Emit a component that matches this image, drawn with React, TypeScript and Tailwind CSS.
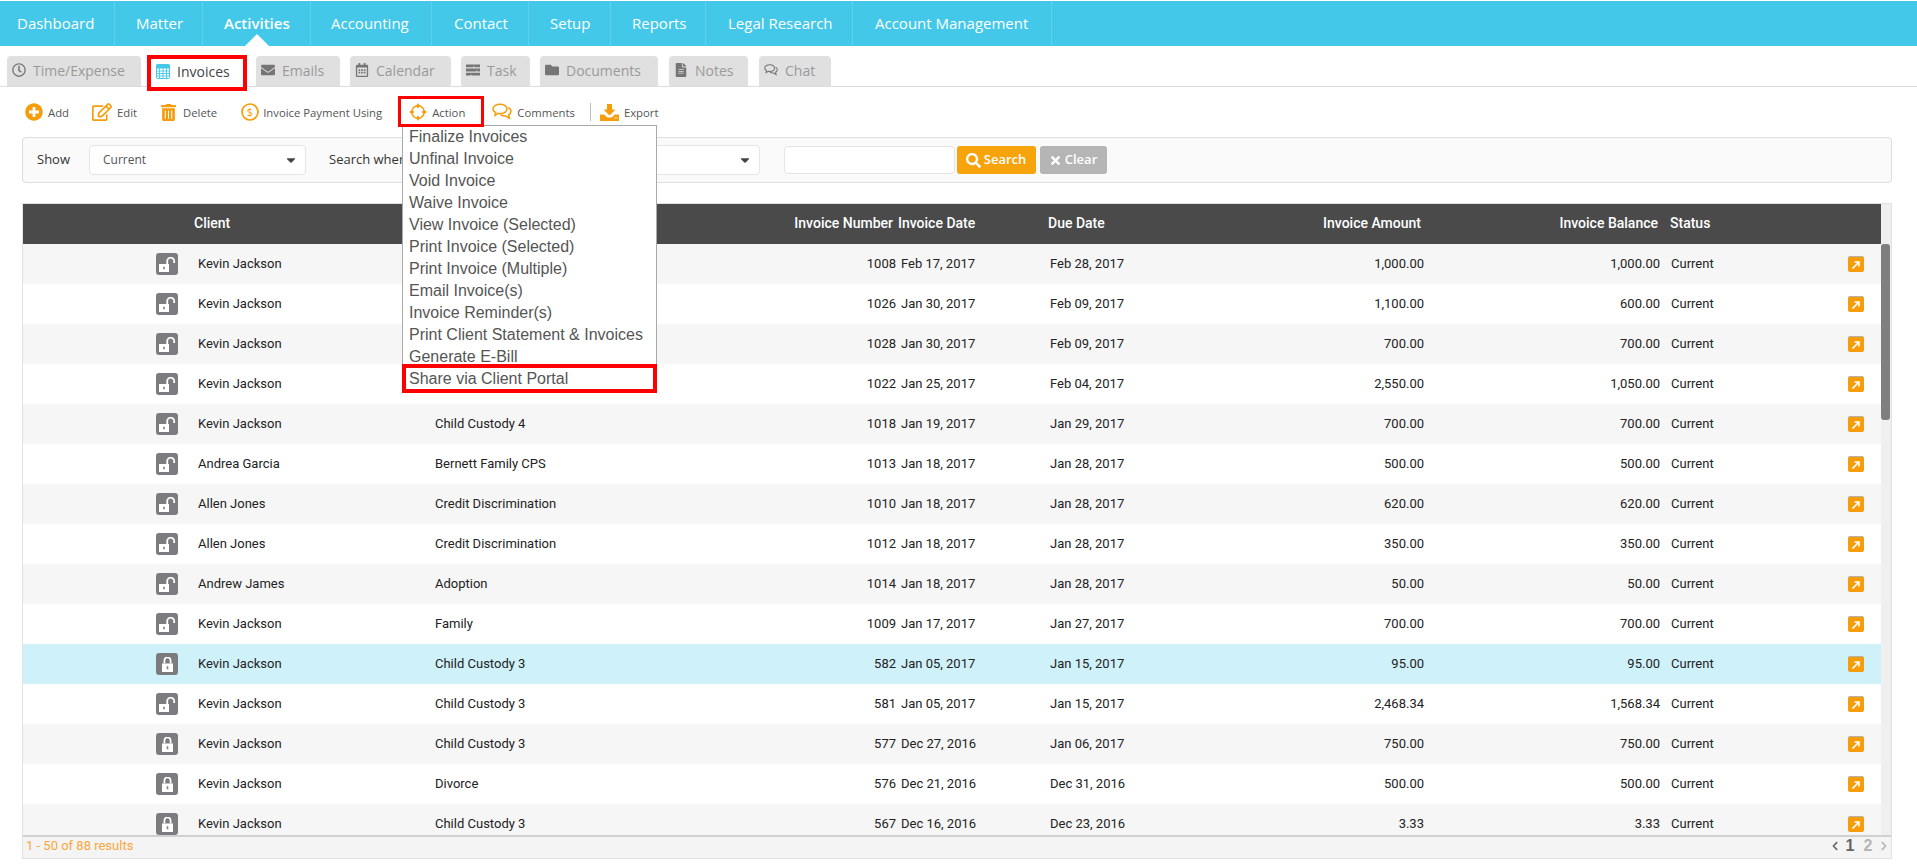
import { FaCaretDown, FaChevronLeft, FaChevronRight, FaEnvelope, FaFileAlt, FaFolder, FaPlusCircle, FaRegCalendarAlt, FaRegClock, FaRegEdit, FaSearch, FaTimes, FaTrashAlt } from 'react-icons/fa';

const navItems = [
  { label: 'Dashboard', width: 'w-[115px] pl-[17px]' },
  { label: 'Matter', width: 'w-[88px] pl-[21px]' },
  { label: 'Activities', width: 'w-[108px] pl-[21px] font-semibold' },
  { label: 'Accounting', width: 'w-[121px] pl-[20px]' },
  { label: 'Contact', width: 'w-[97px] pl-[22px]' },
  { label: 'Setup', width: 'w-[82px] pl-[21px]' },
  { label: 'Reports', width: 'w-[95px] pl-[21px]' },
  { label: 'Legal Research', width: 'w-[147px] pl-[22px]' },
  { label: 'Account Management', width: 'w-[199px] pl-[22px]' },
];

const menuItems = [
  'Finalize Invoices',
  'Unfinal Invoice',
  'Void Invoice',
  'Waive Invoice',
  'View Invoice (Selected)',
  'Print Invoice (Selected)',
  'Print Invoice (Multiple)',
  'Email Invoice(s)',
  'Invoice Reminder(s)',
  'Print Client Statement & Invoices',
  'Generate E-Bill',
];

const rows = [
  { open: true, client: 'Kevin Jackson', matter: '', no: '1008', date: 'Feb 17, 2017', due: 'Feb 28, 2017', amount: '1,000.00', balance: '1,000.00' },
  { open: true, client: 'Kevin Jackson', matter: '', no: '1026', date: 'Jan 30, 2017', due: 'Feb 09, 2017', amount: '1,100.00', balance: '600.00' },
  { open: true, client: 'Kevin Jackson', matter: '', no: '1028', date: 'Jan 30, 2017', due: 'Feb 09, 2017', amount: '700.00', balance: '700.00' },
  { open: true, client: 'Kevin Jackson', matter: '', no: '1022', date: 'Jan 25, 2017', due: 'Feb 04, 2017', amount: '2,550.00', balance: '1,050.00' },
  { open: true, client: 'Kevin Jackson', matter: 'Child Custody 4', no: '1018', date: 'Jan 19, 2017', due: 'Jan 29, 2017', amount: '700.00', balance: '700.00' },
  { open: true, client: 'Andrea Garcia', matter: 'Bernett Family CPS', no: '1013', date: 'Jan 18, 2017', due: 'Jan 28, 2017', amount: '500.00', balance: '500.00' },
  { open: true, client: 'Allen Jones', matter: 'Credit Discrimination', no: '1010', date: 'Jan 18, 2017', due: 'Jan 28, 2017', amount: '620.00', balance: '620.00' },
  { open: true, client: 'Allen Jones', matter: 'Credit Discrimination', no: '1012', date: 'Jan 18, 2017', due: 'Jan 28, 2017', amount: '350.00', balance: '350.00' },
  { open: true, client: 'Andrew James', matter: 'Adoption', no: '1014', date: 'Jan 18, 2017', due: 'Jan 28, 2017', amount: '50.00', balance: '50.00' },
  { open: true, client: 'Kevin Jackson', matter: 'Family', no: '1009', date: 'Jan 17, 2017', due: 'Jan 27, 2017', amount: '700.00', balance: '700.00' },
  { open: false, client: 'Kevin Jackson', matter: 'Child Custody 3', no: '582', date: 'Jan 05, 2017', due: 'Jan 15, 2017', amount: '95.00', balance: '95.00', active: true },
  { open: true, client: 'Kevin Jackson', matter: 'Child Custody 3', no: '581', date: 'Jan 05, 2017', due: 'Jan 15, 2017', amount: '2,468.34', balance: '1,568.34' },
  { open: false, client: 'Kevin Jackson', matter: 'Child Custody 3', no: '577', date: 'Dec 27, 2016', due: 'Jan 06, 2017', amount: '750.00', balance: '750.00' },
  { open: false, client: 'Kevin Jackson', matter: 'Divorce', no: '576', date: 'Dec 21, 2016', due: 'Dec 31, 2016', amount: '500.00', balance: '500.00' },
  { open: false, client: 'Kevin Jackson', matter: 'Child Custody 3', no: '567', date: 'Dec 16, 2016', due: 'Dec 23, 2016', amount: '3.33', balance: '3.33' },
];

const CalcIcon = () => (
  <svg width="14" height="15" viewBox="0 0 14 15" className="text-[#44c8ea]">
    <rect x="0.5" y="0.5" width="13" height="14" rx="1" fill="none" stroke="currentColor" />
    <rect x="0.5" y="0.5" width="13" height="4" fill="currentColor" />
    <path d="M0 7h14M0 9.500h14M0 12h14M3.500 4v11M7 4v11M10.500 4v11" stroke="currentColor" strokeWidth="0.9" />
  </svg>
);

const TaskIcon = () => (
  <svg width="15" height="12" viewBox="0 0 15 12" fill="currentColor">
    <path d="M0 0h15v3H9V2H8v1H0zM0 4.500h15v3h-3v-1h-1v1H0zM0 9h15v3H6v-1H5v1H0z" />
  </svg>
);

const DollarIcon = () => (
  <svg width="18" height="18" viewBox="0 0 18 18" className="text-[#f59d0a]">
    <circle cx="9" cy="9" r="8" fill="none" stroke="currentColor" strokeWidth="1.7" />
    <text x="9" y="13" textAnchor="middle" fontSize="11" fontFamily="Open Sans" fill="currentColor">$</text>
  </svg>
);

const TargetIcon = () => (
  <svg width="18" height="18" viewBox="0 0 18 18" className="text-[#f59d0a]">
    <circle cx="9" cy="9" r="6.200" fill="none" stroke="currentColor" strokeWidth="1.400" />
    <path d="M9 0l2 3-2 2.500L7 3zM9 18l-2-3 2-2.500 2 2.500zM0 9l3-2 2.500 2L3 11zM18 9l-3 2-2.500-2L15 7z" fill="currentColor" />
  </svg>
);

// two overlapping speech bubbles, the front one on the upper left
const BubblesIcon = ({ size = 20 }: { size?: number }) => (
  <svg width={size} height={size * 0.9} viewBox="0 0 20 18" fill="none" stroke="currentColor">
    <path d="M8 1.200c3.900 0 7 2 7 4.700s-3.100 4.700-7 4.700c-.7 0-1.300 0-1.900-.2L3 12.300l.7-2.900C2 8.600 1 7.300 1 5.900 1 3.200 4.100 1.200 8 1.200z" strokeWidth="1.500" />
    <path d="M16.400 4.500c1.600.9 2.600 2.200 2.600 3.800 0 1.500-.9 2.700-2.400 3.500l.8 3.400-3.600-2.300c-2 .2-4-.2-5.400-1.200" strokeWidth="1.500" />
  </svg>
);

const ExportIcon = () => (
  <svg width="19" height="17" viewBox="0 0 19 17" className="text-[#f59d0a]">
    <path d="M7 0h5v5.500h3.500L9.500 11.500 3.500 5.500H7z" fill="currentColor" />
    <path d="M0 10.500h4L7.500 13.500h4L15 10.500h4V17H0z" fill="currentColor" />
    <path d="M14.500 14h1.200M16.500 14h1" stroke="#fff" strokeWidth="1" />
  </svg>
);

const LockGlyph = ({ open }: { open: boolean }) =>
  open ? (
    <svg width="17" height="15" viewBox="0 0 17 15" fill="#fff">
      <path fillRule="evenodd" d="M0 7h10v8H0zM4.200 9.800v2.400h1.600V9.800z" />
      <path d="M8.200 7V4.200a3.500 3.500 0 0 1 7 0V6" fill="none" stroke="#fff" strokeWidth="1.800" />
    </svg>
  ) : (
    <svg width="11" height="15" viewBox="0 0 11 15" fill="#fff">
      <path fillRule="evenodd" d="M0 6.500h11V15H0zM4.700 9.300v2.900h1.600V9.300z" />
      <path d="M2.400 6.500V3.600a3.100 3.100 0 0 1 6.200 0v2.900" fill="none" stroke="#fff" strokeWidth="1.700" />
    </svg>
  );

const ArrowIcon = () => (
  <span className="flex h-4 w-4 items-center justify-center rounded-[2px] border-t border-[#b9b2a6] bg-[#f59d0a]">
    <svg width="10" height="10" viewBox="0 0 10 10">
      <path d="M1.500 8.500L7 3M3.500 2h4.500v4.500" fill="none" stroke="#fff" strokeWidth="1.600" />
    </svg>
  </span>
);

const Tab = ({ icon, label, className }: { icon: React.ReactNode; label: string; className: string }) => (
  <div className={`flex h-[30px] items-center gap-[7px] rounded-t-[4px] bg-[#e0e0e0] pb-[2px] pl-[5px] text-[14px] text-[#9a9a9a] ${className}`}>
    <span className="flex w-[14px] justify-center text-[14px] text-[#757575]">{icon}</span>
    {label}
  </div>
);

const Tool = ({ icon, label, iconWidth, gap, className }: { icon: React.ReactNode; label: string; iconWidth: string; gap: string; className?: string }) => (
  <div className={`flex items-center text-[11.300px] text-[#555] ${className ?? ''}`}>
    <span className={`flex justify-center ${iconWidth} ${gap}`}>{icon}</span>
    <span className="pt-[3px]">{label}</span>
  </div>
);

const cols = 'grid grid-cols-[171px_237px_357px_108px_149px_205px_174px_236px_1fr_41px] items-center';

export default function App() {
  return (
    <div className="relative h-[867px] w-[1917px] overflow-hidden bg-white font-['Open_Sans',sans-serif]">
      {/* Top nav */}
      <div className="relative mt-px flex h-[45px] bg-[#44c8ea] text-[15px] text-white">
        {navItems.map(item => (
          <div key={item.label} className={`relative flex items-center whitespace-nowrap border-r border-[#5fd0ec] pb-px ${item.width}`}>
            {item.label}
            {item.label === 'Activities' && (
              <span className="absolute bottom-0 left-1/2 -ml-[12px] h-0 w-0 border-x-[12px] border-b-[12px] border-x-transparent border-b-white" />
            )}
          </div>
        ))}
      </div>

      {/* Sub tabs */}
      <div className="flex h-[41px] items-end border-b border-[#ddd] pl-[7px]">
        <Tab icon={<FaRegClock />} label="Time/Expense" className="w-[134px]" />
        <div className="-mb-[5px] ml-[6px] mr-[9px] flex h-[36px] w-[100px] items-center gap-[7px] border-4 border-[#ff0000] bg-white pb-[4px] pl-[5px] text-[14px] text-[#444]">
          <CalcIcon />
          Invoices
        </div>
        <Tab icon={<FaEnvelope />} label="Emails" className="w-[84px]" />
        <Tab icon={<FaRegCalendarAlt />} label="Calendar" className="ml-[10px] w-[101px]" />
        <Tab icon={<TaskIcon />} label="Task" className="ml-[10px] w-[69px]" />
        <Tab icon={<FaFolder />} label="Documents" className="ml-[10px] w-[118px]" />
        <Tab icon={<FaFileAlt />} label="Notes" className="ml-[11px] w-[79px] gap-[6px]" />
        <Tab icon={<BubblesIcon size={14} />} label="Chat" className="ml-[11px] w-[72px]" />
      </div>

      {/* Toolbar */}
      <div className="flex h-[50px] items-center pl-[25px]">
        <Tool icon={<FaPlusCircle className="text-[18px] text-[#f59d0a]" />} label="Add" iconWidth="w-[18px]" gap="mr-[5px]" />
        <Tool icon={<FaRegEdit className="text-[20px] text-[#f59d0a]" />} label="Edit" iconWidth="w-[20px]" gap="mr-[5px]" className="ml-[23px]" />
        <Tool icon={<FaTrashAlt className="text-[17px] text-[#f59d0a]" />} label="Delete" iconWidth="w-[15px]" gap="mr-[7px]" className="ml-[24px]" />
        <Tool icon={<DollarIcon />} label="Invoice Payment Using" iconWidth="w-[18px]" gap="mr-[4px]" className="ml-[24px]" />
        <Tool icon={<TargetIcon />} label="Action" iconWidth="w-[18px]" gap="mr-[5px]" className="ml-[27px]" />
        <Tool icon={<span className="text-[#f59d0a]"><BubblesIcon /></span>} label="Comments" iconWidth="w-[20px]" gap="mr-[5px]" className="ml-[27px]" />
        <div className="ml-[15px] mr-[9px] h-[18px] w-px bg-[#bbb]" />
        <Tool icon={<ExportIcon />} label="Export" iconWidth="w-[19px]" gap="mr-[5px]" />
      </div>

      {/* Filter panel */}
      <div className="mx-[22px] flex h-[46px] w-[1870px] items-center rounded-[4px] border border-[#ddd] bg-[#fafafa] pl-[14px] text-[13px] text-[#333]">
        <span>Show</span>
        <div className="ml-[19px] flex h-[30px] w-[217px] items-center justify-between rounded-[4px] border border-[#e5e5e5] bg-white pl-[13px] pr-[7px] text-[12px] text-[#555]">
          Current
          <FaCaretDown className="text-[14px] text-[#444]" />
        </div>
        <span className="ml-[23px]">Search where</span>
        <div className="ml-[58px] flex h-[30px] w-[290px] items-center justify-end rounded-[4px] border border-[#e5e5e5] bg-white pr-[7px]">
          <FaCaretDown className="text-[14px] text-[#444]" />
        </div>
        <div className="ml-[24px] h-[28px] w-[171px] rounded-[4px] border border-[#e5e5e5] bg-white" />
        <div className="ml-[2px] flex h-[28px] w-[79px] items-center justify-center gap-[3px] rounded-[3px] bg-[#f7a30b] text-[13px] font-semibold text-white">
          <FaSearch className="text-[15px]" />
          Search
        </div>
        <div className="ml-[4px] flex h-[28px] w-[67px] items-center justify-center gap-[3px] rounded-[3px] bg-[#b5b5b5] text-[13px] font-semibold text-white">
          <FaTimes className="text-[13px]" />
          Clear
        </div>
      </div>

      {/* Invoice table */}
      <div className="mx-[22px] mt-[20px] flex h-[656px] w-[1870px] flex-col border border-[#e2e2e2] font-['Roboto',sans-serif]">
        <div className="relative flex min-h-0 flex-1 overflow-hidden">
          <div className="min-w-0 flex-1">
            <div className={`${cols} h-[40px] bg-[#4a4a4a] pb-[2px] text-[14px] font-medium text-white`}>
              <span />
              <span>Client</span>
              <span />
              <span className="whitespace-nowrap pr-[3px] text-right">Invoice Number</span>
              <span className="pl-[2px]">Invoice Date</span>
              <span className="pl-[3px]">Due Date</span>
              <span className="pr-[3px] text-right">Invoice Amount</span>
              <span className="pr-[2px] text-right">Invoice Balance</span>
              <span className="pl-[10px]">Status</span>
              <span />
            </div>
            {rows.map((r, i) => (
              <div key={r.no} className={`${cols} h-[40px] text-[13px] text-[#222] ${r.active ? 'bg-[#cff1fa]' : i % 2 === 0 ? 'bg-[#f6f6f6]' : 'bg-white'}`}>
                <div className="flex justify-end pr-[16px]">
                  <span className="flex h-[22px] w-[22px] items-center justify-center rounded-[3px] bg-[#7c7c80]">
                    <LockGlyph open={r.open} />
                  </span>
                </div>
                <span className="pl-[4px]">{r.client}</span>
                <span className="pl-[4px]">{r.matter}</span>
                <span className="text-right">{r.no}</span>
                <span className="pl-[5px]">{r.date}</span>
                <span className="pl-[5px]">{r.due}</span>
                <span className="text-right">{r.amount}</span>
                <span className="text-right">{r.balance}</span>
                <span className="pl-[11px]">Current</span>
                <span className="flex justify-start pl-[8px]"><ArrowIcon /></span>
              </div>
            ))}
          </div>
          {/* Scrollbar */}
          <div className="w-[10px] shrink-0 bg-[#efefef]">
            <div className="mt-[40px] h-[176px] w-[9px] rounded-[3px] bg-[#7f7f82]" />
          </div>
        </div>
        <div className="flex h-[23px] shrink-0 items-center justify-between border-t-2 border-[#d0d0d0] bg-[#f4f4f4] pb-[3px] pl-[3px] pr-[3px] text-[13px] text-[#f9a63a]">
          <span>1 - 50 of 88 results</span>
          <div className="flex items-center font-['Liberation_Sans',sans-serif] text-[16px] font-bold">
            <span className="flex w-[8px] justify-center text-[10px] text-[#666]"><FaChevronLeft /></span>
            <span className="ml-[6px] w-[10px] text-center text-[#666]">1</span>
            <span className="ml-[8px] w-[10px] text-center text-[#b5b5b5]">2</span>
            <span className="ml-[7px] flex w-[8px] justify-center text-[10px] text-[#b5b5b5]"><FaChevronRight /></span>
          </div>
        </div>
      </div>

      {/* Action dropdown */}
      <div className="absolute left-[402px] top-[125px] w-[255px] border border-[#a9a9a9] bg-white font-['Liberation_Sans',sans-serif] text-[16px] text-[#555]">
        {menuItems.map(item => (
          <div key={item} className="flex h-[22px] items-center whitespace-nowrap pl-[6px]">{item}</div>
        ))}
        <div className="flex h-[22px] items-center pl-[6px]">Share via Client Portal</div>
      </div>

      {/* Callouts */}
      <div className="pointer-events-none absolute left-[398px] top-[96px] h-[31px] w-[86px] border-[3px] border-[#ff0000]" />
      <div className="pointer-events-none absolute left-[402px] top-[364px] h-[29px] w-[255px] border-4 border-[#ff0000]" />
    </div>
  );
}
